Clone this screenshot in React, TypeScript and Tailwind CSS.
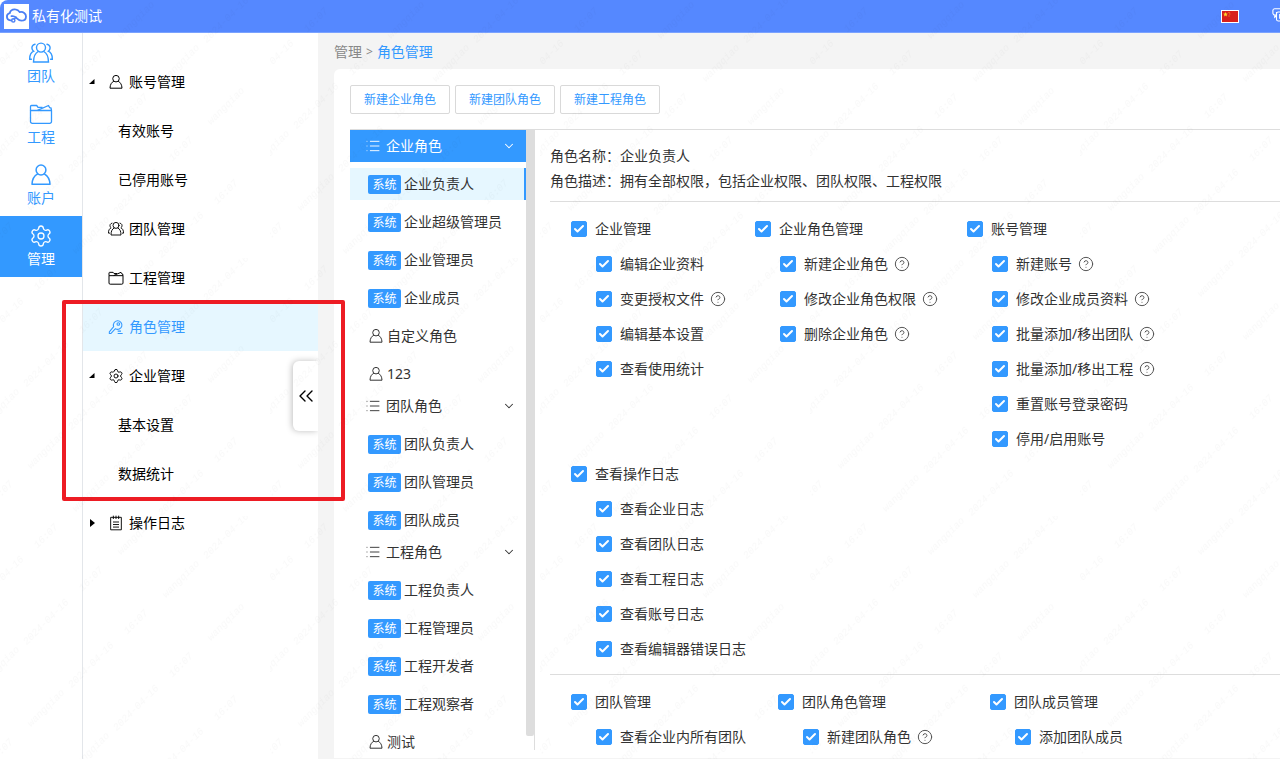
import { useState } from "react";
import type { ReactNode } from "react";
import clsx from "clsx";
import { Check, ChevronDown, ChevronsLeft, CircleQuestionMark, List, Settings } from "lucide-react";

type IconProps = { className?: string; sw?: number };

type MenuItem = {
  label: string;
  icon?: ReactNode;
  arrow?: "open" | "closed";
  active?: boolean;
};

type Role = { name: string; system: boolean };

type RoleGroup = { title: string; roles: Role[] };

type Permission = { name: string; help?: boolean };

type PermissionGroup = { title: string; items: Permission[] };

const UserIcon = ({ className, sw = 1.5 }: IconProps) => (
  <svg viewBox="0 0 24 24" fill="none" stroke="currentColor" strokeWidth={sw} strokeLinejoin="round" className={className}>
    <circle cx="12" cy="7" r="4.9" />
    <path d="M8.8 10.8C5.400 12.500 3.200 15.500 3 21.300h18c-.2-5.500-2.400-8.700-5.800-10.500" />
  </svg>
);

const TeamIcon = ({ className, sw = 1.4 }: IconProps) => (
  <svg viewBox="0 0 24 24" fill="none" stroke="currentColor" strokeWidth={sw} strokeLinecap="round" className={className}>
    <circle cx="12" cy="6.6" r="4.5" />
    <path d="M9.200 10.500C6 12.200 4.600 15 4.500 21h15c-.1-6-1.500-8.800-4.700-10.500" />
    <path d="M6 3.200C3.500 3.700 2.400 6 3.200 8.200c.3.900.8 1.500 1.500 2C2 11.500.6 14 .7 18.200h1.700" />
    <path d="M18 3.200c2.500.5 3.600 2.800 2.800 5-.3.900-.8 1.500-1.500 2 2.700 1.300 4.100 3.800 4 8h-1.700" />
  </svg>
);

const FolderIcon = ({ className, sw = 1.3 }: IconProps) => (
  <svg viewBox="0 0 24 24" fill="none" stroke="currentColor" strokeWidth={sw} strokeLinejoin="round" className={className}>
    <path d="M1.500 8.500h21v11a1.800 1.800 0 0 1-1.800 1.800H3.300a1.800 1.800 0 0 1-1.800-1.800z" />
    <path d="M1.500 8.500v-4c0-.6.4-1 1-1h5.200l1.300 1.800h4.500M8.500 8.300l11-4.800 1.200 2.200 1.300.3.500 2.500" />
  </svg>
);

const KeyIcon = ({ className }: IconProps) => (
  <svg viewBox="0 0 24 24" fill="none" stroke="currentColor" strokeWidth="1.6" strokeLinejoin="round" className={className}>
    <path d="M11.200 14.600l-7 7.200H2v-2.600l6.500-7.800a6.400 6.400 0 1 1 2.700 3.200z" />
    <circle cx="15.500" cy="7.500" r="2" />
    <path d="M14.500 18.200h5M14.500 21.800h7.500" />
  </svg>
);

const LogIcon = ({ className }: IconProps) => (
  <svg viewBox="0 0 24 24" fill="none" stroke="currentColor" strokeWidth="1.4" className={className}>
    <path d="M4 3.500h16v18.700H4zM8 1v5M12 1v5M16 1v5M7.500 10.500h9M7.500 14.300h9M7.500 18.100h9" />
  </svg>
);

const Logo = () => (
  <svg viewBox="0 0 25 25" fill="none" stroke="#4b7ff5" strokeLinecap="round" className="size-[25px] shrink-0 bg-white">
    <path
      d="M7.500 16.300H6.300a3.600 3.600 0 0 1-.6-7.100C6.300 6.700 8.800 5.200 11.300 5.400c1.900.1 3.500 1.100 4.400 2.700 3.600-.7 6.300 1.500 6.300 4.300 0 2.700-2.100 4.300-4.700 4.300-2.300 0-3.700-1.800-5.300-3.200-1.400-1.200-2.800-1.700-4.500-1.300"
      strokeWidth="1.8"
    />
    <path d="M10.200 15.200l1.800-1.900" strokeWidth="1.4" />
    <circle cx="9.300" cy="16.400" r="1.600" strokeWidth="1.4" />
  </svg>
);

const Flag = () => (
  <svg viewBox="0 0 18 13" className="h-[13px] w-[18px]">
    <rect width="18" height="13" fill="#fff" />
    <rect x="1" y="1" width="16" height="11" fill="#d8201c" />
    <path d="M4.500 2l.7 1.500 1.600.2-1.200 1.100.3 1.600-1.400-.8-1.400.8.3-1.600-1.200-1.100 1.600-.2z" fill="#ffd92e" />
    <path d="M7.500 2h1v1h-1zM8.300 3.600h1v1h-1zM7.500 5.500h1v1h-1z" fill="#f5a623" />
  </svg>
);

const WindowsIcon = () => (
  <svg viewBox="0 0 20 20" fill="none" stroke="#fff" strokeWidth="1.2" className="size-[18px]">
    <path d="M5 5.500V9H3.500A2.500 2.500 0 0 1 1 7V4a2 2 0 0 1 2-2h10.500a2 2 0 0 1 2 2v1.500M3 9v2.500L5 9.800" />
    <path d="M7 5.500h9.500a2 2 0 0 1 2 2v6a2 2 0 0 1-2 2H7a2 2 0 0 1-2-2v-6a2 2 0 0 1 2-2zM8.500 8.500h6v4h-6z" />
  </svg>
);

const Arrow = ({ kind }: { kind: "open" | "closed" }) => (
  <svg viewBox="0 0 6 8" className="h-2 w-1.5" fill="#000">
    {kind === "open" ? <path d="M5.500 1v5H0z" /> : <path d="M1 0l5 4-5 4z" />}
  </svg>
);

const rail = [
  { label: "团队", icon: <TeamIcon className="size-6" /> },
  { label: "工程", icon: <FolderIcon className="size-6" /> },
  { label: "账户", icon: <UserIcon className="size-6" /> },
  { label: "管理", icon: <Settings className="size-6" strokeWidth={1.3} />, active: true },
];

const menu: MenuItem[] = [
  { label: "账号管理", icon: <UserIcon className="size-4" />, arrow: "open" },
  { label: "有效账号" },
  { label: "已停用账号" },
  { label: "团队管理", icon: <TeamIcon className="size-4" /> },
  { label: "工程管理", icon: <FolderIcon className="size-4" sw={1.5} /> },
  { label: "角色管理", icon: <KeyIcon className="size-4" />, active: true },
  { label: "企业管理", icon: <Settings className="size-4" strokeWidth={1.4} />, arrow: "open" },
  { label: "基本设置" },
  { label: "数据统计" },
  { label: "操作日志", icon: <LogIcon className="size-4" />, arrow: "closed" },
];

const roleGroups: RoleGroup[] = [
  {
    title: "企业角色",
    roles: [
      { name: "企业负责人", system: true },
      { name: "企业超级管理员", system: true },
      { name: "企业管理员", system: true },
      { name: "企业成员", system: true },
      { name: "自定义角色", system: false },
      { name: "123", system: false },
    ],
  },
  {
    title: "团队角色",
    roles: [
      { name: "团队负责人", system: true },
      { name: "团队管理员", system: true },
      { name: "团队成员", system: true },
    ],
  },
  {
    title: "工程角色",
    roles: [
      { name: "工程负责人", system: true },
      { name: "工程管理员", system: true },
      { name: "工程开发者", system: true },
      { name: "工程观察者", system: true },
      { name: "测试", system: false },
    ],
  },
];

const enterprise: PermissionGroup[] = [
  {
    title: "企业管理",
    items: [
      { name: "编辑企业资料" },
      { name: "变更授权文件", help: true },
      { name: "编辑基本设置" },
      { name: "查看使用统计" },
    ],
  },
  {
    title: "企业角色管理",
    items: [
      { name: "新建企业角色", help: true },
      { name: "修改企业角色权限", help: true },
      { name: "删除企业角色", help: true },
    ],
  },
  {
    title: "账号管理",
    items: [
      { name: "新建账号", help: true },
      { name: "修改企业成员资料", help: true },
      { name: "批量添加/移出团队", help: true },
      { name: "批量添加/移出工程", help: true },
      { name: "重置账号登录密码" },
      { name: "停用/启用账号" },
    ],
  },
  {
    title: "查看操作日志",
    items: [
      { name: "查看企业日志" },
      { name: "查看团队日志" },
      { name: "查看工程日志" },
      { name: "查看账号日志" },
      { name: "查看编辑器错误日志" },
    ],
  },
];

const team: PermissionGroup[] = [
  { title: "团队管理", items: [{ name: "查看企业内所有团队" }] },
  { title: "团队角色管理", items: [{ name: "新建团队角色", help: true }] },
  { title: "团队成员管理", items: [{ name: "添加团队成员" }] },
];

const CheckRow = ({ name, help }: Permission) => (
  <div className="flex h-[35px] items-center gap-1.5">
    <label className="flex items-center gap-2 whitespace-nowrap">
      <span className="relative flex size-4">
        <input
          type="checkbox"
          defaultChecked
          className="peer size-4 appearance-none rounded-xs border border-[#d9d9d9] checked:border-[#3399ff] checked:bg-[#3399ff]"
        />
        <Check strokeWidth={4} className="pointer-events-none absolute top-0.5 left-0.5 hidden size-3 text-white peer-checked:block" />
      </span>
      {name}
    </label>
    {help && <CircleQuestionMark className="size-4 text-[#555]" strokeWidth={1.5} />}
  </div>
);

const PermissionBlock = ({ group }: { group: PermissionGroup }) => (
  <div>
    <CheckRow name={group.title} />
    <div className="pl-[25px]">
      {group.items.map((item) => (
        <CheckRow key={item.name} {...item} />
      ))}
    </div>
  </div>
);

// login name and time, tiled over the whole page
const Watermark = () => {
  const words = ["wangqiao", "2024-04-16", "16:07"];
  const rows = [0, 1, 2, 3, 4, 5];
  return (
    <svg aria-hidden="true" className="pointer-events-none absolute inset-0 z-30 size-full">
      <defs>
        <pattern id="mark" width="270" height="258" patternUnits="userSpaceOnUse">
          {rows.map((r) =>
            words.map((w, i) => (
              <text
                key={`${r}-${w}`}
                transform={`translate(${(138 + i * 90 + r * 45) % 270} ${r * 43 + 22}) rotate(-45)`}
                textAnchor="middle"
                fontSize="10"
                fill="#000"
                fillOpacity="0.025"
                className="font-['Liberation_Mono',monospace] italic"
              >
                {w}
              </text>
            ))
          )}
        </pattern>
      </defs>
      <rect width="100%" height="100%" fill="url(#mark)" />
    </svg>
  );
};

const App = () => {
  const [selected, setSelected] = useState("企业负责人");

  return (
    <div className="relative flex h-screen flex-col overflow-hidden bg-white font-['Noto_Sans','Noto_Sans_CJK_SC',sans-serif] text-[14px] leading-[22px] text-[#333]">
      <header className="flex h-[33px] shrink-0 items-center gap-[3px] overflow-hidden rounded-tl-lg border-b border-[#7aa2ff] bg-[#5588ff] pl-1 text-white">
        <Logo />
        <span>私有化测试</span>
        <div className="-mr-2.5 ml-auto flex shrink-0 items-center gap-[33px]">
          <button aria-label="语言">
            <Flag />
          </button>
          <button aria-label="窗口">
            <WindowsIcon />
          </button>
        </div>
      </header>

      <div className="flex min-h-0 flex-1">
        <nav className="w-[83px] shrink-0 border-r border-[#e3e6ea]">
          {rail.map((item) => (
            <a
              key={item.label}
              href="#"
              className={clsx(
                "flex h-[61px] flex-col items-center pt-2",
                item.active ? "bg-[#3399ff] text-white" : "text-[#3399ff]"
              )}
            >
              {item.icon}
              {item.label}
            </a>
          ))}
        </nav>

        <aside className="relative w-[235px] shrink-0 pt-6 text-black">
          {menu.map((item) => (
            <a
              key={item.label}
              href="#"
              className={clsx(
                "flex h-[49px] items-center",
                item.icon ? "pl-1.5" : "pl-[35px]",
                item.active && "bg-[#e6f7ff] text-[#3399ff]"
              )}
            >
              {item.icon && (
                <>
                  <span className="w-[19px]">{item.arrow && <Arrow kind={item.arrow} />}</span>
                  <span className="mr-[5px]">{item.icon}</span>
                </>
              )}
              {item.label}
            </a>
          ))}
          <button
            aria-label="收起"
            className="absolute top-1/2 right-0 flex h-[70px] w-[25px] -translate-y-1/2 items-center justify-center rounded-l-md bg-white shadow-[-1px_0_6px_rgba(0,0,0,0.25)] [clip-path:inset(-8px_0_-8px_-8px)]"
          >
            <ChevronsLeft className="size-6 shrink-0" strokeWidth={1.4} />
          </button>
          <div className="pointer-events-none absolute top-[267px] -left-[21px] z-20 h-[201px] w-[283px] rounded-xs border-4 border-[#ed1c24]" />
        </aside>

        <main className="flex min-w-0 flex-1 flex-col bg-[#f4f4f4] pb-px pl-4">
          <div className="flex h-9 shrink-0 items-center gap-1 pt-0.5 text-[#888]">
            <a href="#">管理</a>
            <span className="text-xs">&gt;</span>
            <a href="#" className="text-[#3399ff]">
              角色管理
            </a>
          </div>

          <section className="flex min-h-0 flex-1 flex-col rounded-tl-md bg-white pt-4 pb-2 pl-4">
            <div className="mb-[15px] flex shrink-0 gap-[5px] text-xs text-[#3399ff]">
              {["新建企业角色", "新建团队角色", "新建工程角色"].map((text) => (
                <button key={text} className="h-[29px] w-[100px] rounded-xs border border-[#d9d9d9]">
                  {text}
                </button>
              ))}
            </div>

            <div className="flex min-h-0 flex-1 border-t border-[#ddd]">
              <div className="w-[176px] shrink-0 overflow-hidden">
                {roleGroups.map((group, i) => (
                  <div key={group.title}>
                    <button
                      className={clsx(
                        "flex h-8 w-full items-center pr-2.5 pl-[15px]",
                        i === 0 && "bg-[#3399ff] text-white"
                      )}
                    >
                      <List className="mr-[5px] size-4" strokeWidth={1.4} />
                      {group.title}
                      <ChevronDown className="ml-auto size-3.5" strokeWidth={1.8} />
                    </button>
                    {group.roles.map((role) => (
                      <button
                        key={role.name}
                        onClick={() => setSelected(role.name)}
                        className={clsx(
                          "mt-1.5 flex h-8 w-full items-center gap-[3px] pl-[18px]",
                          selected === role.name && "border-r-2 border-[#3399ff] bg-[#e6f7ff]"
                        )}
                      >
                        {role.system ? (
                          <span className="h-[19px] w-[33px] rounded-xs bg-[#3399ff] text-center text-xs leading-[19px] text-white">
                            系统
                          </span>
                        ) : (
                          <UserIcon className="size-4" />
                        )}
                        {role.name}
                      </button>
                    ))}
                  </div>
                ))}
              </div>
              <div className="w-[9px] shrink-0 border-r border-[#ddd] pb-3.5">
                <div className="h-full rounded-b-xs bg-[#ddd]" />
              </div>

              <div className="min-w-0 flex-1 overflow-hidden pt-[13px] pl-[15px]">
                <div className="border-b border-[#ddd] pb-2 leading-[25px] whitespace-nowrap">
                  <p>角色名称：企业负责人</p>
                  <p>角色描述：拥有全部权限，包括企业权限、团队权限、工程权限</p>
                </div>
                <div className="grid grid-cols-[184px_212px_1fr] border-b border-[#ddd] pt-[9px] pb-2 pl-[21px]">
                  {enterprise.map((group) => (
                    <PermissionBlock key={group.title} group={group} />
                  ))}
                </div>
                <div className="grid grid-cols-[207px_212px_1fr] pt-[9px] pl-[21px]">
                  {team.map((group) => (
                    <PermissionBlock key={group.title} group={group} />
                  ))}
                </div>
              </div>
            </div>
          </section>
        </main>
      </div>
      <Watermark />
    </div>
  );
};

export default App;
